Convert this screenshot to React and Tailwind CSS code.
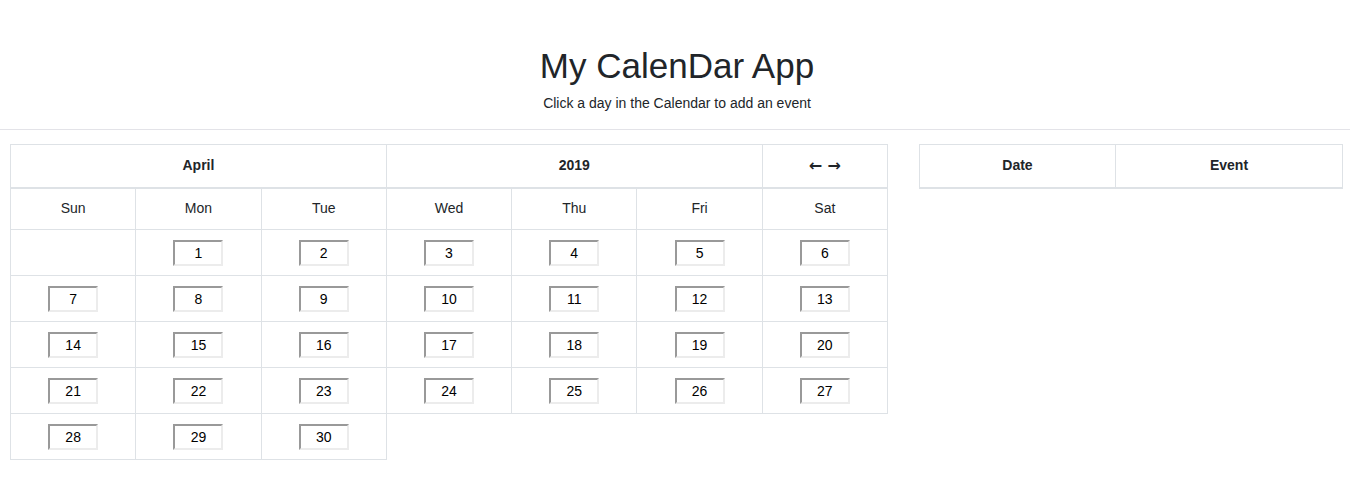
import { useState } from "react";

const days = ["Sun", "Mon", "Tue", "Wed", "Thu", "Fri", "Sat"];

// April 2019 starts on a Monday
const buildWeeks = () => {
  const cells = [null];
  for (let d = 1; d <= 30; d++) cells.push(d);
  const weeks = [];
  for (let i = 0; i < cells.length; i += 7) weeks.push(cells.slice(i, i + 7));
  return weeks;
};

const DayBox = ({ day }) => (
  <input
    readOnly
    value={day}
    className="w-[50px] h-[26px] text-center text-[14px] text-black bg-white border-2 border-t-[#999] border-l-[#999] border-b-[#ececec] border-r-[#ececec] outline-none"
  />
);

export default function App() {
  const [weeks] = useState(buildWeeks);

  return (
    <div className="min-h-screen bg-white text-[#212529] font-['Liberation_Sans',Arial,sans-serif]">
      <header className="pt-[44px] pl-[4px] text-center">
        <h1 className="text-[35px] leading-[43px]">My CalenDar App</h1>
        <p className="mt-[6px] text-[14px] leading-[21px]">
          Click a day in the Calendar to add an event
        </p>
      </header>
      <hr className="mt-[15px] border-t border-[#e3e3e8]" />

      <div className="flex items-start gap-[31px] pl-[10px] pt-[14px]">
        <table className="w-[878px] shrink-0 table-fixed border-collapse text-[14px] leading-[21px]">
          <thead>
            <tr className="h-[43px]">
              <th colSpan={3} className="border border-[#dee2e6] border-b-2 font-bold">
                April
              </th>
              <th colSpan={3} className="border border-[#dee2e6] border-b-2 font-bold">
                2019
              </th>
              <th className="border border-[#dee2e6] border-b-2 font-bold font-['DejaVu_Sans',sans-serif] text-[16px]">
                ← →
              </th>
            </tr>
          </thead>
          <tbody>
            <tr className="h-[42px]">
              {days.map((d) => (
                <td key={d} className="border border-[#dee2e6] text-center">
                  {d}
                </td>
              ))}
            </tr>
            {weeks.map((week, i) => (
              <tr key={i} className="h-[46px]">
                {week.map((day, j) =>
                  day === null ? (
                    <td key={j} className="border border-[#dee2e6]" />
                  ) : (
                    <td key={j} className="border border-[#dee2e6] text-center align-middle">
                      <DayBox day={day} />
                    </td>
                  )
                )}
              </tr>
            ))}
          </tbody>
        </table>

        <table className="w-[424px] shrink-0 table-fixed border-collapse text-[14px] leading-[21px]">
          <thead>
            <tr className="h-[43px]">
              <th className="w-[196px] border border-[#dee2e6] border-b-2 font-bold">Date</th>
              <th className="border border-[#dee2e6] border-b-2 font-bold">Event</th>
            </tr>
          </thead>
          <tbody />
        </table>
      </div>
    </div>
  );
}
